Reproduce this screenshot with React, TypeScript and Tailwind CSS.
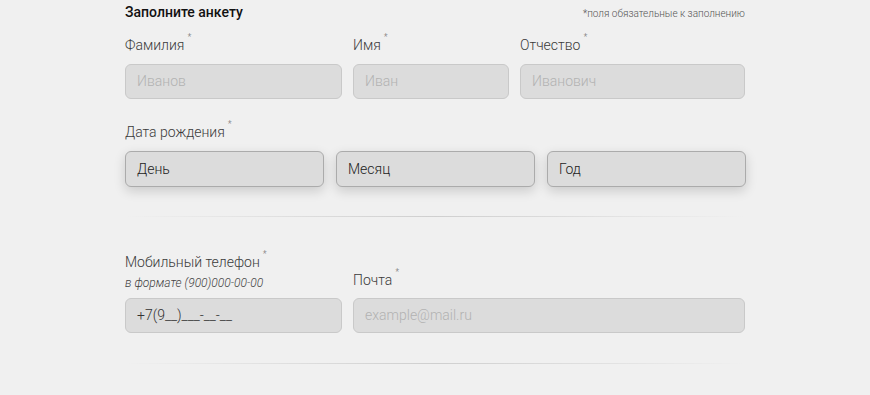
import React from 'react';

const font = { fontFamily: 'Roboto, "Noto Sans", sans-serif' };

interface LabelProps {
  text: string;
  className?: string;
}

// label with a small raised asterisk for required fields
const Label: React.FC<LabelProps> = ({ text, className = '' }) => (
  <div className={`h-5 leading-5 text-[14px] text-[#3a3a3a] font-light ${className}`}>
    {text}
    <span className="relative -top-[10px] ml-[3px] text-[9px] text-[#666]">*</span>
  </div>
);

const TextInput: React.FC<{ placeholder: string; value?: string }> = ({ placeholder, value }) => (
  <div className="h-[35px] rounded-[6px] border border-[#c9c9c9] bg-[#dcdcdc] px-[11px] flex items-center text-[14px] font-light">
    {value ? (
      <span className="text-[#333]">{value}</span>
    ) : (
      <span className="text-[#b2b2b2]">{placeholder}</span>
    )}
  </div>
);

const SelectBox: React.FC<{ text: string }> = ({ text }) => (
  <div className="h-[36px] rounded-[6px] border border-[#ababab] bg-[#dcdcdc] px-[11px] flex items-center text-[14px] font-light text-[#222] shadow-[0_4px_12px_rgba(0,0,0,0.16)]">
    {text}
  </div>
);

const Divider: React.FC<{ className?: string }> = ({ className = '' }) => (
  <div className={`h-px bg-gradient-to-r from-transparent via-[#cfcfcf] to-transparent ${className}`} />
);

export default function App() {
  return (
    <div className="min-h-[395px] w-full bg-[#f0f0f0]" style={font}>
      <div className="mx-auto w-[620px] pt-[2px]">
        {/* header */}
        <div className="flex items-end justify-between">
          <h3 className="h-5 leading-5 text-[14px] font-medium text-[#111]">Заполните анкету</h3>
          <span className="text-[10px] leading-4 text-[#555] font-light">*поля обязательные к заполнению</span>
        </div>

        {/* ФИО */}
        <div className="mt-[13px] grid grid-cols-[217px_156px_225px] gap-x-[11px]">
          <div>
            <Label text="Фамилия" className="mb-[9px]" />
            <TextInput placeholder="Иванов" />
          </div>
          <div>
            <Label text="Имя" className="mb-[9px]" />
            <TextInput placeholder="Иван" />
          </div>
          <div>
            <Label text="Отчество" className="mb-[9px]" />
            <TextInput placeholder="Иванович" />
          </div>
        </div>

        {/* дата рождения */}
        <Label text="Дата рождения" className="mt-[23px] mb-[9px]" />
        <div className="grid grid-cols-3 gap-x-[12px] w-[621px]">
          <SelectBox text="День" />
          <SelectBox text="Месяц" />
          <SelectBox text="Год" />
        </div>

        <Divider className="mt-[29px]" />

        {/* контакты */}
        <div className="mt-[35px] grid grid-cols-[217px_392px] gap-x-[11px] items-end">
          <div>
            <Label text="Мобильный телефон" />
            <div className="mt-[3px] mb-[7px] h-4 leading-4 text-[12px] italic font-light text-[#444]">
              в формате (900)000-00-00
            </div>
            <TextInput placeholder="" value="+7(9__)___-__-__" />
          </div>
          <div>
            <Label text="Почта" className="mb-[8px]" />
            <TextInput placeholder="example@mail.ru" />
          </div>
        </div>

        <Divider className="mt-[30px]" />
      </div>
    </div>
  );
}
